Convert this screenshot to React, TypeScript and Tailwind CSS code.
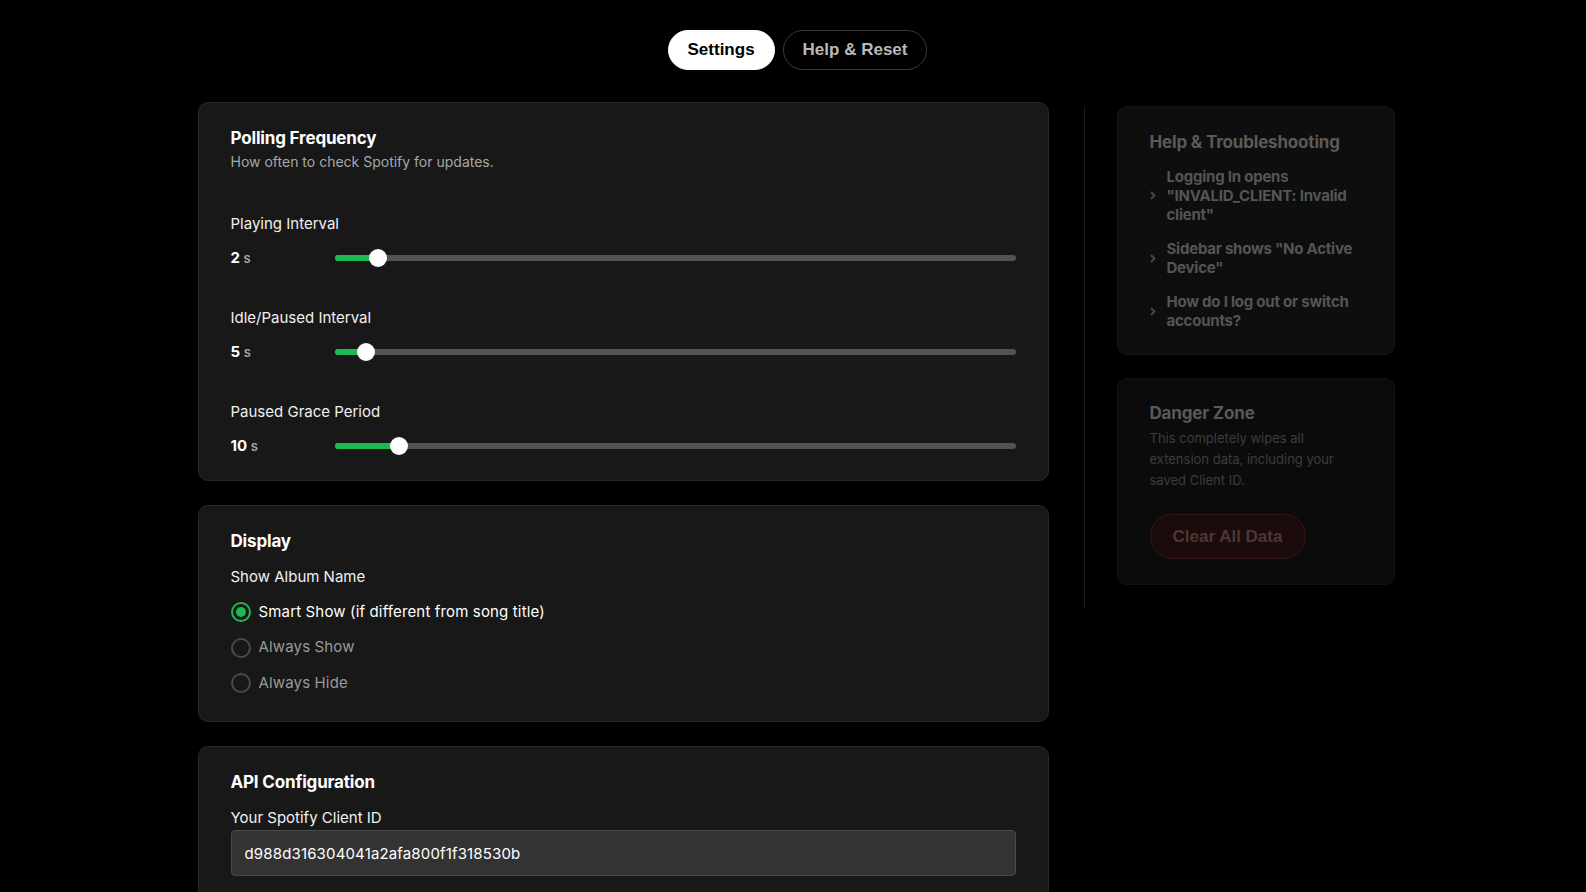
import { useState } from "react";

type Slider = { label: string; value: number; min: number; max: number };

const sliders: Slider[] = [
  { label: "Playing Interval", value: 2, min: 1, max: 20 },
  { label: "Idle/Paused Interval", value: 5, min: 2, max: 92 },
  { label: "Paused Grace Period", value: 10, min: 0, max: 120 },
];

const albumOptions = [
  "Smart Show (if different from song title)",
  "Always Show",
  "Always Hide",
];

const helpItems = [
  'Logging In opens "INVALID_CLIENT: Invalid client"',
  'Sidebar shows "No Active Device"',
  "How do I log out or switch accounts?",
];

function SliderRow({ s }: { s: Slider }) {
  const pct = (s.value - s.min) / (s.max - s.min);
  return (
    <div>
      <div className="text-[15px] leading-6 text-[#f0f0f0]">{s.label}</div>
      <div className="mt-[10px] flex h-6 items-center">
        <div className="w-[104px] shrink-0 text-[15px] font-bold text-white">
          {s.value} <span className="text-[13px] font-semibold text-[#a7a7a7]">s</span>
        </div>
        <div className="relative h-[6px] flex-1 rounded-full bg-[#535353]">
          <div
            className="absolute left-0 top-0 h-[6px] rounded-full bg-[#1db954]"
            style={{ width: `calc(${pct} * (100% - 18px) + 9px)` }}
          />
          <div
            className="absolute top-1/2 h-[18px] w-[18px] -translate-y-1/2 rounded-full bg-white"
            style={{ left: `calc(${pct} * (100% - 18px))` }}
          />
        </div>
      </div>
    </div>
  );
}

function Card({
  title,
  pad = "pb-6",
  children,
}: {
  title: string;
  pad?: string;
  children: React.ReactNode;
}) {
  return (
    <section className={`rounded-[10px] border border-[#282828] bg-[#181818] px-8 pt-[22px] ${pad}`}>
      <h2 className="text-[17px] font-bold leading-[27px] tracking-[-0.01em] text-white">{title}</h2>
      {children}
    </section>
  );
}

export default function App() {
  const [tab, setTab] = useState("settings");
  const [album, setAlbum] = useState(0);

  return (
    <div
      className="min-h-screen bg-black text-white"
      style={{ fontFamily: "Inter, 'Noto Sans', sans-serif" }}
    >
      <nav
        className="flex justify-center gap-2 pl-[9px] pt-[30px]"
        style={{ fontFamily: "'Liberation Sans', Arial, sans-serif" }}
      >
        <button
          onClick={() => setTab("settings")}
          className={
            tab === "settings"
              ? "h-[40px] rounded-full border border-white bg-white px-[19px] text-[17px] font-bold text-black"
              : "h-[40px] rounded-full border border-[#3a3a3a] px-[19px] text-[17px] font-bold text-[#b8b8b8]"
          }
        >
          Settings
        </button>
        <button
          onClick={() => setTab("help")}
          className={
            tab === "help"
              ? "h-[40px] rounded-full border border-white bg-white px-[19px] text-[17px] font-bold text-black"
              : "h-[40px] rounded-full border border-[#3a3a3a] px-[19px] text-[17px] font-bold text-[#b8b8b8]"
          }
        >
          Help &amp; Reset
        </button>
      </nav>

      <div className="mt-[32px] flex justify-center pl-[6px]">
        <main className="flex w-[851px] flex-col gap-[24px]">
          <section className="rounded-[10px] border border-[#282828] bg-[#181818] px-8 pb-[22px] pt-[22px]">
            <h2 className="text-[17px] font-bold leading-[27px] tracking-[-0.01em] text-white">
              Polling Frequency
            </h2>
            <p className="text-[14px] leading-5 text-[#a7a7a7]">
              How often to check Spotify for updates.
            </p>
            <div className="mt-10 flex flex-col gap-9">
              {sliders.map((s) => (
                <SliderRow key={s.label} s={s} />
              ))}
            </div>
          </section>

          <Card title="Display" pad="pb-[26px]">
            <div className="mt-[10px] text-[15px] leading-6 text-[#f0f0f0]">Show Album Name</div>
            <div className="mt-[11px] flex flex-col gap-[11.5px]">
              {albumOptions.map((o, i) => (
                <label
                  key={o}
                  onClick={() => setAlbum(i)}
                  className="flex h-6 cursor-pointer items-center gap-2"
                >
                  {album === i ? (
                    <span className="flex h-5 w-5 items-center justify-center rounded-full border-2 border-[#1db954]">
                      <span className="h-[10px] w-[10px] rounded-full bg-[#1db954]" />
                    </span>
                  ) : (
                    <span className="h-5 w-5 rounded-full border-2 border-[#4a4a4a]" />
                  )}
                  <span
                    className={
                      album === i
                        ? "text-[15px] tracking-[0.01em] text-white"
                        : "text-[15px] tracking-[0.01em] text-[#9a9a9a]"
                    }
                  >
                    {o}
                  </span>
                </label>
              ))}
            </div>
          </Card>

          <Card title="API Configuration">
            <div className="mt-[10px] text-[15px] leading-6 text-[#f0f0f0]">Your Spotify Client ID</div>
            <input
              readOnly
              value="d988d316304041a2afa800f1f318530b"
              className="h-[46px] w-full rounded-[4px] border border-[#4a4a4a] bg-[#333333] px-[13px] text-[15px] tracking-[0.01em] text-white outline-none"
            />
            <div className="h-10" />
          </Card>
        </main>

        <aside className="ml-[35px] mt-1 w-[311px] self-start border-l border-[#1a1a1a] pb-6 pl-8">
          <div className="flex w-[278px] flex-col gap-[23px]">
            <section className="rounded-[10px] border border-[#151515] bg-[#0e0e0e] px-8 pb-[24px] pt-[22px]">
              <h3 className="text-[17px] font-bold leading-[27px] tracking-[-0.01em] text-[#5a5a5a]">
                Help &amp; Troubleshooting
              </h3>
              <ul className="mt-[11px] flex flex-col gap-[15px]">
                {helpItems.map((h) => (
                  <li key={h} className="flex items-center gap-[11px]">
                    <svg width="6" height="9" viewBox="0 0 6 9" className="shrink-0">
                      <path d="M1 1l3.5 3.5L1 8" fill="none" stroke="#4a4a4a" strokeWidth="1.8" />
                    </svg>
                    <span className="text-[15px] font-bold leading-[19px] tracking-[-0.015em] text-[#555555]">{h}</span>
                  </li>
                ))}
              </ul>
            </section>

            <section className="rounded-[10px] border border-[#1d0e0e] bg-[#0c0b0b] px-8 pb-[25px] pt-[21px]">
              <h3 className="text-[17px] font-bold leading-[27px] tracking-[-0.01em] text-[#595959]">Danger Zone</h3>
              <p className="mt-px text-[13px] leading-[21px] text-[#3d3d3d]">
                This completely wipes all extension data, including your saved Client ID.
              </p>
              <button
                className="mt-[23px] h-[45px] w-[156px] rounded-full border border-[#3a1515] bg-[#1c0b0b] text-[17px] font-bold text-[#4c3636]"
                style={{ fontFamily: "'Liberation Sans', Arial, sans-serif" }}
              >
                Clear All Data
              </button>
            </section>
          </div>
        </aside>
      </div>
    </div>
  );
}
